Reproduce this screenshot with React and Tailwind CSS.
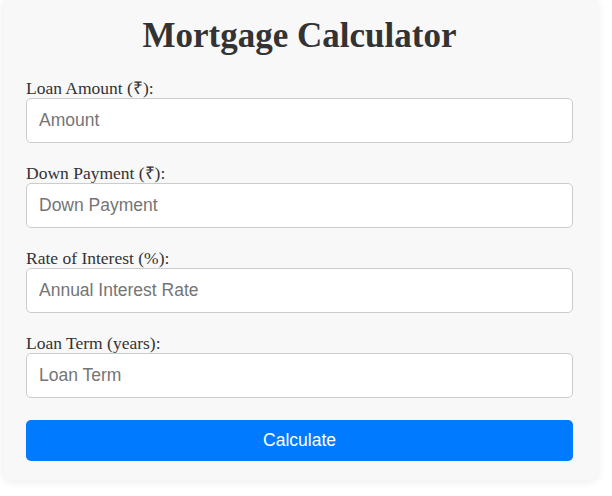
import React, { useState } from "react";

const fields = [
  { key: "amount", label: "Loan Amount (₹):", placeholder: "Amount" },
  { key: "down", label: "Down Payment (₹):", placeholder: "Down Payment" },
  { key: "rate", label: "Rate of Interest (%):", placeholder: "Annual Interest Rate" },
  { key: "term", label: "Loan Term (years):", placeholder: "Loan Term" },
];

const App = () => {
  const [values, setValues] = useState({});

  return (
    <div className="min-h-screen bg-white">
      <div className="ml-[3px] w-[595px] rounded-b-[10px] bg-[#f8f8f8] pl-[23px] pr-[25px] pt-[16px] pb-[19px] shadow-[0_2px_10px_rgba(0,0,0,0.08)]">
        <h1 className="mb-[22px] text-center font-['Liberation_Serif',serif] text-[35px] font-bold leading-[40px] text-[#333]">
          Mortgage Calculator
        </h1>
        {fields.map((f) => (
          <div key={f.key} className="mb-[20px]">
            <label className="block font-['Liberation_Serif',serif] text-[17.5px] leading-[20px] text-[#333]">
              {f.label}
            </label>
            <input
              type="text"
              placeholder={f.placeholder}
              value={values[f.key] || ""}
              onChange={(e) => setValues({ ...values, [f.key]: e.target.value })}
              className="block h-[45px] w-full rounded-[5px] border border-[#ccc] bg-white px-[12px] font-['Liberation_Sans',Arial,sans-serif] text-[17.5px] text-[#333] outline-none placeholder:text-[#757575]"
            />
          </div>
        ))}
        <button className="mt-[22px] block h-[41px] w-full rounded-[5px] bg-[#007bff] font-['Liberation_Sans',Arial,sans-serif] text-[17.5px] text-white">
          Calculate
        </button>
      </div>
    </div>
  );
};

export default App;
